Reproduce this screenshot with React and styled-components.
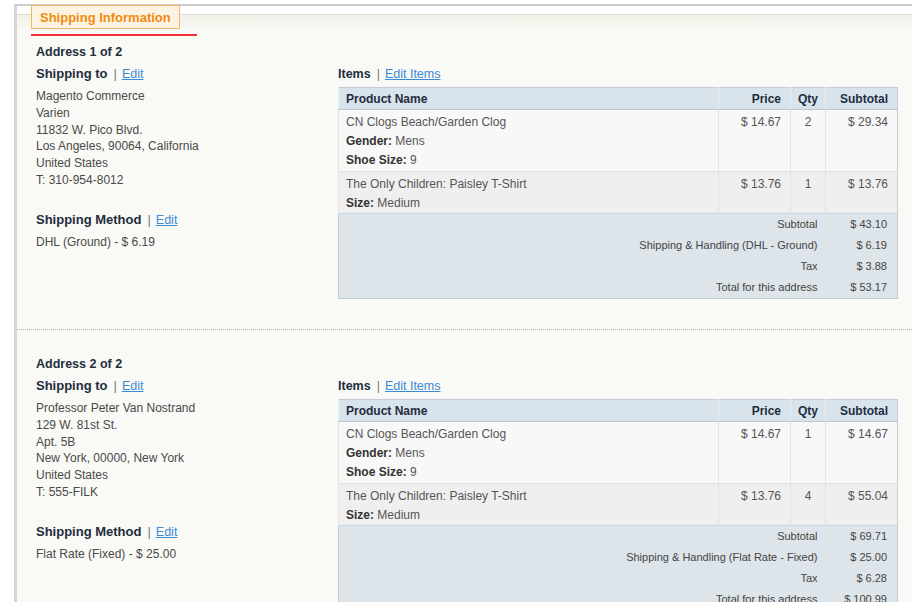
import React from "react";
import styled, { createGlobalStyle } from "styled-components";

const GlobalStyle = createGlobalStyle`
  html, body {
    margin: 0;
    padding: 0;
    background: #fff;
    overflow: hidden;
  }
  body {
    font-family: "Liberation Sans", Arial, sans-serif;
    font-size: 12px;
    color: #4a4a4a;
  }
`;

const Frame = styled.div`
  position: relative;
  margin: 4px -40px 0 14px;
  border-top: 2px solid #cdcdcd;
  border-left: 3px solid #d6d6d6;
`;

const FrameHead = styled.div`
  height: 8px;
  background: #fff;
  border-bottom: 1px solid #dedbd3;
`;

const FrameBody = styled.div`
  background: linear-gradient(#f2f0e8 0, #f9f9f5 14px, #f9f9f5 100%);
  min-height: 600px;
`;

const Legend = styled.div`
  position: absolute;
  left: 14px;
  top: -1px;
  padding: 0 8px;
  height: 22px;
  line-height: 23px;
  background: #fcf3e2;
  border: 1px solid #f1b469;
  color: #f28a10;
  font-weight: bold;
  font-size: 13px;

  &::after {
    content: "";
    position: absolute;
    left: -1px;
    top: 28px;
    width: 166px;
    height: 2px;
    background: #f6313a;
  }
`;

const Section = styled.div`
  display: grid;
  grid-template-columns: 302px 559px;
  padding: ${(p) => (p.first ? "29px" : "26px")} 0 30px 19px;
  border-top: ${(p) => (p.first ? "none" : "1px dotted #a8a8a8")};
`;

const AddressTitle = styled.div`
  grid-column: 1 / 3;
  font-weight: bold;
  font-size: 12.5px;
  line-height: 17px;
  color: #1f2d3f;
  margin-bottom: 4px;
`;

const Col = styled.div`
  display: flex;
  flex-direction: column;
`;

const Heading = styled.div`
  font-weight: bold;
  font-size: ${(p) => (p.small ? "12.5px" : "13px")};
  line-height: 18px;
  color: #1f2d3f;
  margin-top: ${(p) => p.gap || 0}px;
`;

const Pipe = styled.span`
  font-weight: normal;
  color: #7a7a7a;
  margin: 0 5px 0 6px;
`;

const EditLink = styled.a`
  font-weight: normal;
  font-size: 12.5px;
  color: #3a8ad8;
  text-decoration: underline;
`;

const Lines = styled.div`
  margin-top: 5px;
  line-height: 16.8px;
  color: #4a4a4a;
`;

const Table = styled.table`
  margin-top: 4px;
  width: 559px;
  border-collapse: collapse;
  border: 1px solid #c3ccd5;
  table-layout: fixed;
`;

const Th = styled.th`
  background: #d9e3ec;
  color: #1f2d3f;
  font-size: 12px;
  font-weight: bold;
  line-height: 16px;
  padding: 3px ${(p) => (p.align === "right" ? "9px" : "7px")} 2px 7px;
  text-align: ${(p) => p.align || "left"};
  border-bottom: 1px solid #bccad7;
  border-left: 1px solid #e8eef3;
`;

const Row = styled.tr`
  background: ${(p) => (p.alt ? "#efefef" : "#f8f8f8")};
  border-top: 1px solid #e2e2e2;
`;

const Td = styled.td`
  vertical-align: top;
  padding: 3px ${(p) => (p.align === "right" ? "9px" : "7px")} 1px 7px;
  text-align: ${(p) => p.align || "left"};
  line-height: 19px;
  color: #555;
  font-size: 12px;
  border-left: 1px solid #e3e3e3;

  tr:last-child > & {
    padding-bottom: 0;
  }
`;

const Label = styled.b`
  color: #333;
`;

const Foot = styled.tfoot`
  background: #dde4ea;
  border-top: 1px solid #ccd5dd;
`;

const FootTd = styled.td`
  text-align: right;
  font-size: 11px;
  line-height: 17px;
  padding: 2px ${(p) => (p.value ? "10px" : "8px")} 2px 8px;
  color: #444;
`;

const orders = [
  {
    title: "Address 1 of 2",
    address: [
      "Magento Commerce",
      "Varien",
      "11832 W. Pico Blvd.",
      "Los Angeles, 90064, California",
      "United States",
      "T: 310-954-8012",
    ],
    method: "DHL (Ground) - $ 6.19",
    items: [
      { name: "CN Clogs Beach/Garden Clog", opts: [["Gender", "Mens"], ["Shoe Size", "9"]], price: "$ 14.67", qty: 2, sub: "$ 29.34" },
      { name: "The Only Children: Paisley T-Shirt", opts: [["Size", "Medium"]], price: "$ 13.76", qty: 1, sub: "$ 13.76" },
    ],
    totals: [
      ["Subtotal", "$ 43.10"],
      ["Shipping & Handling (DHL - Ground)", "$ 6.19"],
      ["Tax", "$ 3.88"],
      ["Total for this address", "$ 53.17"],
    ],
  },
  {
    title: "Address 2 of 2",
    address: [
      "Professor Peter Van Nostrand",
      "129 W. 81st St.",
      "Apt. 5B",
      "New York, 00000, New York",
      "United States",
      "T: 555-FILK",
    ],
    method: "Flat Rate (Fixed) - $ 25.00",
    items: [
      { name: "CN Clogs Beach/Garden Clog", opts: [["Gender", "Mens"], ["Shoe Size", "9"]], price: "$ 14.67", qty: 1, sub: "$ 14.67" },
      { name: "The Only Children: Paisley T-Shirt", opts: [["Size", "Medium"]], price: "$ 13.76", qty: 4, sub: "$ 55.04" },
    ],
    totals: [
      ["Subtotal", "$ 69.71"],
      ["Shipping & Handling (Flat Rate - Fixed)", "$ 25.00"],
      ["Tax", "$ 6.28"],
      ["Total for this address", "$ 100.99"],
    ],
  },
];

const ItemsTable = ({ items, totals }) => (
  <Table>
    <colgroup>
      <col style={{ width: 380 }} />
      <col style={{ width: 72 }} />
      <col style={{ width: 35 }} />
      <col style={{ width: 72 }} />
    </colgroup>
    <thead>
      <tr>
        <Th>Product Name</Th>
        <Th align="right">Price</Th>
        <Th align="center">Qty</Th>
        <Th align="right">Subtotal</Th>
      </tr>
    </thead>
    <tbody>
      {items.map((it, i) => (
        <Row key={i} alt={i % 2 === 1}>
          <Td>
            {it.name}
            {it.opts.map(([k, v]) => (
              <div key={k}>
                <Label>{k}:</Label> {v}
              </div>
            ))}
          </Td>
          <Td align="right">{it.price}</Td>
          <Td align="center">{it.qty}</Td>
          <Td align="right">{it.sub}</Td>
        </Row>
      ))}
    </tbody>
    <Foot>
      {totals.map(([k, v]) => (
        <tr key={k}>
          <FootTd colSpan={3}>{k}</FootTd>
          <FootTd value>{v}</FootTd>
        </tr>
      ))}
    </Foot>
  </Table>
);

const App = () => (
  <>
    <GlobalStyle />
    <Frame>
      <Legend>Shipping Information</Legend>
      <FrameHead />
      <FrameBody>
        {orders.map((o, i) => (
          <Section key={o.title} first={i === 0}>
            <AddressTitle>{o.title}</AddressTitle>
            <Col>
              <Heading>
                Shipping to<Pipe>|</Pipe>
                <EditLink href="#">Edit</EditLink>
              </Heading>
              <Lines>
                {o.address.map((l) => (
                  <div key={l}>{l}</div>
                ))}
              </Lines>
              <Heading gap={22}>
                Shipping Method<Pipe>|</Pipe>
                <EditLink href="#">Edit</EditLink>
              </Heading>
              <Lines>{o.method}</Lines>
            </Col>
            <Col>
              <Heading small>
                Items<Pipe>|</Pipe>
                <EditLink href="#">Edit Items</EditLink>
              </Heading>
              <ItemsTable items={o.items} totals={o.totals} />
            </Col>
          </Section>
        ))}
      </FrameBody>
    </Frame>
  </>
);

export default App;
